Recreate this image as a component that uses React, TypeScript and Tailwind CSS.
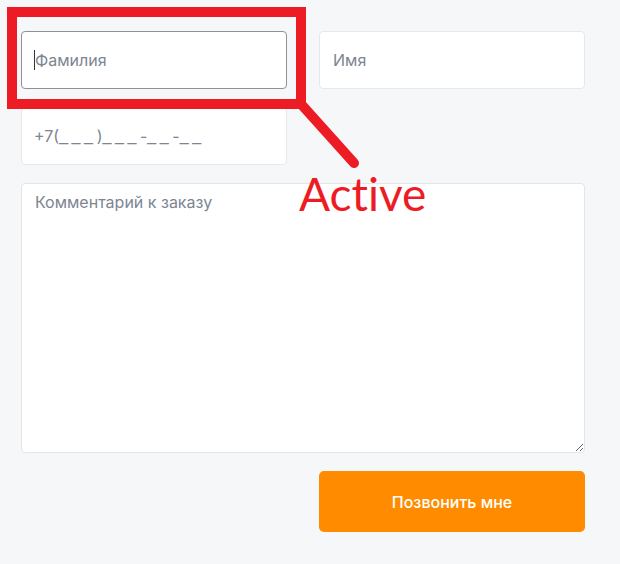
import React from "react";

export default function App() {
  const field =
    "h-[58px] w-full rounded-[4px] border bg-white px-[13px] text-[16px] text-[#2b2f36] placeholder:text-[#7d8592] outline-none";
  const us = "tracking-[3.6px] font-['Liberation_Sans',sans-serif]";
  return (
    <div
      className="relative min-h-[564px] w-[620px] bg-[#f6f7f9]"
      style={{ fontFamily: "Inter, 'Noto Sans', sans-serif" }}
    >
      <div className="w-[564px] ml-[21px] pt-[31px] flex flex-col gap-[18px]">
        <div className="grid grid-cols-2 gap-x-[32px] gap-y-[18px]">
          <div className="relative">
            <input
              className={field + " border-[#8e9196] caret-[#222]"}
              placeholder="Фамилия"
            />
            <span className="absolute left-[13px] top-[19px] h-[20px] w-[1px] bg-[#333]" />
          </div>
          <input className={field + " border-[#e6e8eb]"} placeholder="Имя" />
          <div className="relative">
            <input className={field + " border-[#e6e8eb]"} aria-label="Телефон" />
            <span className="pointer-events-none absolute left-[13px] top-0 flex h-[58px] items-center whitespace-pre text-[16px] text-[#7d8592]">
              +7(<span className={us}>___</span>)<span className={us}>___</span>-<span className={us}>__</span>-<span className={us}>__</span>
            </span>
          </div>
        </div>
        <textarea
          className="h-[270px] w-full rounded-[4px] border border-[#e3e5e8] bg-white px-[13px] py-[6px] text-[16px] text-[#2b2f36] placeholder:text-[#7d8592] outline-none"
          placeholder="Комментарий к заказу"
        />
        <div className="grid grid-cols-2 gap-x-[32px]">
          <div />
          <button className="h-[61px] rounded-[5px] bg-[#ff8c00] text-[16px] font-medium text-white">
            Позвонить мне
          </button>
        </div>
      </div>

      {/* annotation overlay */}
      <div className="pointer-events-none absolute left-[7px] top-[7px] h-[102px] w-[299px] border-[10px] border-[#ed1c24]" />
      <svg
        className="pointer-events-none absolute left-0 top-0"
        width="620"
        height="564"
      >
        <line
          x1="301"
          y1="104"
          x2="354"
          y2="163"
          stroke="#ed1c24"
          strokeWidth="10"
          strokeLinecap="round"
        />
      </svg>
      <span
        className="pointer-events-none absolute left-[299px] top-[171px] text-[46px] leading-none text-[#ed1c24]"
        style={{ fontFamily: "Lato, 'Open Sans', sans-serif", fontVariantLigatures: "none" }}
      >
        Active
      </span>
    </div>
  );
}
